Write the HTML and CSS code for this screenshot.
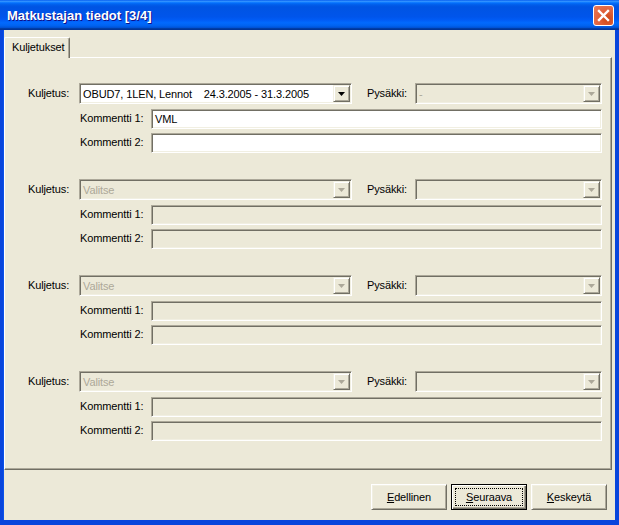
FILE: index.html
```html
<!DOCTYPE html>
<html>
<head>
<meta charset="utf-8">
<title>Matkustajan tiedot [3/4]</title>
<link rel="stylesheet" href="styles.css">
</head>
<body>
<div class="window">
  <div class="titlebar">
    <div class="title">Matkustajan tiedot [3/4]</div>
    <div class="close">
      <svg width="13" height="13" viewBox="0 0 13 13"><path d="M2 2 L11 11 M11 2 L2 11" stroke="#fff" stroke-width="2.4" stroke-linecap="square"/></svg>
    </div>
  </div>
  <div class="client">
    <div class="tabs">
      <div class="tab">Kuljetukset</div>
    </div>
    <div class="panel">
      <div class="group">
        <div class="row row-main">
          <span class="lbl lbl-kul">Kuljetus:</span>
          <div class="field combo combo-kul">
            <span class="val">OBUD7, 1LEN, Lennot    24.3.2005 - 31.3.2005</span>
            <span class="dd"><svg width="7" height="4" viewBox="0 0 7 4"><path d="M0 0H7L3.5 4Z" fill="#000"/></svg></span>
          </div>
          <span class="lbl lbl-pys">Pysäkki:</span>
          <div class="field combo combo-pys disabled">
            <span class="val">-</span>
            <span class="dd dd-off"><svg width="7" height="4" viewBox="0 0 7 4"><path d="M0 0H7L3.5 4Z" fill="#aca899"/></svg></span>
          </div>
        </div>
        <div class="row row-com">
          <span class="lbl lbl-com">Kommentti 1:</span>
          <div class="field input"><span class="val">VML</span></div>
        </div>
        <div class="row row-com row-com2">
          <span class="lbl lbl-com">Kommentti 2:</span>
          <div class="field input"></div>
        </div>
      </div>

      <div class="group">
        <div class="row row-main">
          <span class="lbl lbl-kul">Kuljetus:</span>
          <div class="field combo combo-kul disabled">
            <span class="val">Valitse</span>
            <span class="dd dd-off"><svg width="7" height="4" viewBox="0 0 7 4"><path d="M0 0H7L3.5 4Z" fill="#aca899"/></svg></span>
          </div>
          <span class="lbl lbl-pys">Pysäkki:</span>
          <div class="field combo combo-pys disabled">
            <span class="val"></span>
            <span class="dd dd-off"><svg width="7" height="4" viewBox="0 0 7 4"><path d="M0 0H7L3.5 4Z" fill="#aca899"/></svg></span>
          </div>
        </div>
        <div class="row row-com">
          <span class="lbl lbl-com">Kommentti 1:</span>
          <div class="field input disabled"></div>
        </div>
        <div class="row row-com row-com2">
          <span class="lbl lbl-com">Kommentti 2:</span>
          <div class="field input disabled"></div>
        </div>
      </div>

      <div class="group">
        <div class="row row-main">
          <span class="lbl lbl-kul">Kuljetus:</span>
          <div class="field combo combo-kul disabled">
            <span class="val">Valitse</span>
            <span class="dd dd-off"><svg width="7" height="4" viewBox="0 0 7 4"><path d="M0 0H7L3.5 4Z" fill="#aca899"/></svg></span>
          </div>
          <span class="lbl lbl-pys">Pysäkki:</span>
          <div class="field combo combo-pys disabled">
            <span class="val"></span>
            <span class="dd dd-off"><svg width="7" height="4" viewBox="0 0 7 4"><path d="M0 0H7L3.5 4Z" fill="#aca899"/></svg></span>
          </div>
        </div>
        <div class="row row-com">
          <span class="lbl lbl-com">Kommentti 1:</span>
          <div class="field input disabled"></div>
        </div>
        <div class="row row-com row-com2">
          <span class="lbl lbl-com">Kommentti 2:</span>
          <div class="field input disabled"></div>
        </div>
      </div>

      <div class="group">
        <div class="row row-main">
          <span class="lbl lbl-kul">Kuljetus:</span>
          <div class="field combo combo-kul disabled">
            <span class="val">Valitse</span>
            <span class="dd dd-off"><svg width="7" height="4" viewBox="0 0 7 4"><path d="M0 0H7L3.5 4Z" fill="#aca899"/></svg></span>
          </div>
          <span class="lbl lbl-pys">Pysäkki:</span>
          <div class="field combo combo-pys disabled">
            <span class="val"></span>
            <span class="dd dd-off"><svg width="7" height="4" viewBox="0 0 7 4"><path d="M0 0H7L3.5 4Z" fill="#aca899"/></svg></span>
          </div>
        </div>
        <div class="row row-com">
          <span class="lbl lbl-com">Kommentti 1:</span>
          <div class="field input disabled"></div>
        </div>
        <div class="row row-com row-com2">
          <span class="lbl lbl-com">Kommentti 2:</span>
          <div class="field input disabled"></div>
        </div>
      </div>
    </div>
    <div class="buttons">
      <div class="btn"><u>E</u>dellinen</div>
      <div class="btn btn-default"><u>S</u>euraava</div>
      <div class="btn"><u>K</u>eskeytä</div>
    </div>
  </div>
</div>
</body>
</html>
```

FILE: styles.css
```css
html, body {
  margin: 0;
  padding: 0;
  background: #ece9d8;
}
body {
  font-family: "Liberation Sans", Arial, sans-serif;
  font-size: 11px;
  letter-spacing: -0.12px;
  color: #000;
}
.window {
  width: 619px;
  height: 525px;
  display: flex;
  flex-direction: column;
  overflow: hidden;
}
.titlebar {
  flex: none;
  height: 30px;
  box-sizing: border-box;
  display: flex;
  align-items: center;
  padding: 0 5px 0 7px;
  background: linear-gradient(to bottom,
    #0058ee 0%, #3593ff 4%, #288eff 6%, #127dff 8%, #036ffc 10%,
    #0262ee 14%, #0057e5 20%, #0054e3 24%, #0055eb 56%, #005bf5 66%,
    #026afe 76%, #0062ef 86%, #0052d6 92%, #0040ab 94%, #003092 100%);
}
.title {
  flex: 1;
  color: #fff;
  font-family: "Liberation Sans", Arial, sans-serif;
  font-weight: bold;
  font-size: 13px;
  letter-spacing: 0;
  text-shadow: 1px 1px #0f1089;
}
.close {
  width: 21px;
  height: 21px;
  box-sizing: border-box;
  border: 1px solid #fff;
  border-radius: 3px;
  background: radial-gradient(circle at 70% 70%, #cc4614 0%, #e0613b 45%, #e87a5a 100%);
  display: flex;
  align-items: center;
  justify-content: center;
}
.client {
  flex: 1;
  display: flex;
  flex-direction: column;
  background: #ece9d8;
  border-left: 3px solid #0845dc;
  border-right: 4px solid #0845dc;
  border-bottom: 5px solid #0845dc;
  padding: 7px 3px 0 1px;
  box-shadow: inset 1px 0 #0b52ea;
}
.tabs {
  display: flex;
  height: 20px;
  flex: none;
}
.tab {
  position: relative;
  z-index: 1;
  height: 21px;
  width: 66px;
  box-sizing: border-box;
  border-top: 1px solid #fff;
  border-left: 1px solid #fff;
  border-right: 1px solid #716f64;
  box-shadow: inset -1px 0 #aca899;
  border-radius: 2px 2px 0 0;
  background: #ece9d8;
  padding: 3px 0 0 7px;
  line-height: 13px;
}
.panel {
  flex: none;
  height: 413px;
  box-sizing: border-box;
  border-top: 1px solid #fff;
  border-left: 1px solid #fff;
  border-right: 1px solid #716f64;
  border-bottom: 1px solid #716f64;
  box-shadow: inset -1px -1px #aca899;
  padding: 25px 0 0 23px;
}
.group {
  margin-bottom: 26px;
}
.row {
  display: flex;
  align-items: center;
}
.row-main {
  height: 21px;
}
.row-com {
  height: 20px;
  margin-top: 5px;
  padding-left: 52px;
}
.row-com2 {
  margin-top: 4px;
}
.lbl {
  flex: none;
  white-space: nowrap;
  margin-top: -2px;
}
.lbl-kul { width: 51px; }
.lbl-pys { width: 48px; margin-left: 15px; }
.lbl-com { width: 71px; }

.field {
  flex: none;
  box-sizing: border-box;
  border: 1px solid;
  border-color: #aca899 #fff #fff #aca899;
  box-shadow: inset 1px 1px #716f64, inset -1px -1px #f1efe2;
  background: #fff;
  display: flex;
  align-items: center;
  padding: 1px;
}
.field.disabled {
  background: #ece9d8;
  color: #aca899;
}
.combo {
  height: 21px;
}
.combo-kul { width: 273px; }
.combo-pys { width: 187px; }
.input {
  width: 451px;
  height: 20px;
}
.val {
  flex: 1;
  padding-left: 2px;
  white-space: pre;
  overflow: hidden;
}
.dd {
  flex: none;
  width: 17px;
  height: 17px;
  box-sizing: border-box;
  background: #ece9d8;
  border: 1px solid;
  border-color: #f1efe2 #716f64 #716f64 #f1efe2;
  box-shadow: inset 1px 1px #fff, inset -1px -1px #aca899;
  display: flex;
  align-items: center;
  justify-content: center;
}
.dd svg { display: block; }

.buttons {
  flex: none;
  display: flex;
  justify-content: flex-end;
  gap: 4px;
  margin-top: 14px;
  padding-right: 5px;
}
.btn {
  width: 76px;
  height: 26px;
  box-sizing: border-box;
  display: flex;
  align-items: center;
  justify-content: center;
  background: #ece9d8;
  border: 1px solid;
  border-color: #fff #716f64 #716f64 #fff;
  box-shadow: inset 1px 1px #f1efe2, inset -1px -1px #aca899;
}
.btn u {
  text-decoration: underline;
  text-underline-offset: 1px;
}
.btn-default {
  border: 1px solid #000;
  box-shadow: inset 1px 1px #fff, inset -1px -1px #716f64, inset -2px -2px #aca899;
  outline: 1px dotted #000;
  outline-offset: -5px;
}
```
